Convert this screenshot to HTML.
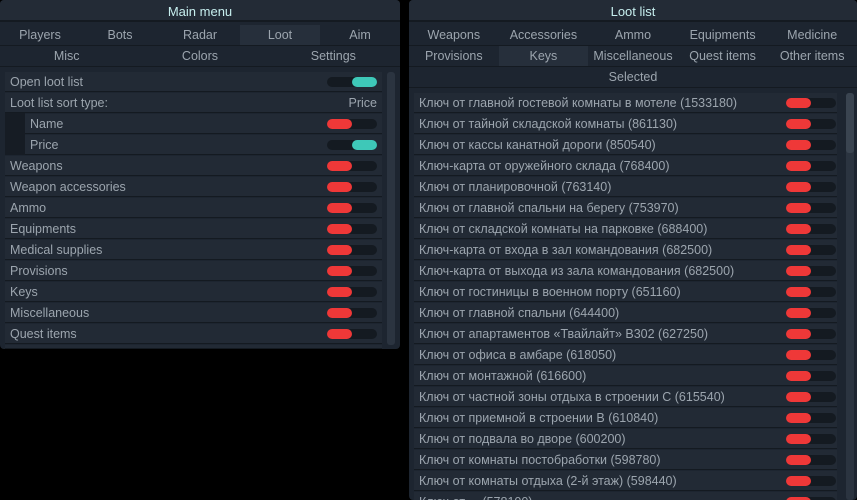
<!DOCTYPE html><html><head><meta charset="utf-8"><style>
*{margin:0;padding:0;box-sizing:border-box}
body{width:857px;height:500px;background:#000;overflow:hidden;font-family:"Liberation Sans","DejaVu Sans",sans-serif;font-size:12.5px;color:#9ca5ae;position:relative}
.win{position:absolute;background:#1d2530;border-radius:4px;overflow:hidden}
.title{height:22px;line-height:24px;text-align:center;color:#c6eeee;background:#232b36;border-bottom:2px solid #141a21;font-size:13px}
.tabs{display:flex;height:21px;border-bottom:1px solid #141a21}
.tabs div{flex:1;text-align:center;line-height:20px}
.tabs .act{background:#262f3b}
.first{margin-top:3px}
.row{position:absolute;height:20px;line-height:21px;background:#222a35;border-bottom:1px solid #141a21;padding-left:5px}
.tg{position:absolute;width:50px;height:10px;top:5px;background:#141a21;border-radius:5px}
.tg i{position:absolute;top:0;width:25px;height:10px;border-radius:5px;background:#ef3838;left:0}
.tg.on i{left:25px;background:#3ec8b8}
.sb{position:absolute;width:8px;background:#2b3440;border-radius:3px}
</style></head><body>
<div class="win" style="left:0;top:0;width:400px;height:349px">
<div class="title">Main menu</div>
<div class="tabs first"><div>Players</div><div>Bots</div><div>Radar</div><div class="act">Loot</div><div>Aim</div></div>
<div class="tabs"><div>Misc</div><div>Colors</div><div>Settings</div></div>
<div style="position:absolute;left:5px;top:113px;width:20px;height:42px;background:#161c24"></div>
<div class="row" style="left:5px;top:72px;width:377px">Open loot list<div class="tg on" style="left:322px"><i></i></div></div>
<div class="row" style="left:5px;top:93px;width:377px">Loot list sort type:<span style="position:absolute;right:5px">Price</span></div>
<div class="row" style="left:25px;top:114px;width:357px">Name<div class="tg" style="left:302px"><i></i></div></div>
<div class="row" style="left:25px;top:135px;width:357px">Price<div class="tg on" style="left:302px"><i></i></div></div>
<div class="row" style="left:5px;top:156px;width:377px">Weapons<div class="tg" style="left:322px"><i></i></div></div>
<div class="row" style="left:5px;top:177px;width:377px">Weapon accessories<div class="tg" style="left:322px"><i></i></div></div>
<div class="row" style="left:5px;top:198px;width:377px">Ammo<div class="tg" style="left:322px"><i></i></div></div>
<div class="row" style="left:5px;top:219px;width:377px">Equipments<div class="tg" style="left:322px"><i></i></div></div>
<div class="row" style="left:5px;top:240px;width:377px">Medical supplies<div class="tg" style="left:322px"><i></i></div></div>
<div class="row" style="left:5px;top:261px;width:377px">Provisions<div class="tg" style="left:322px"><i></i></div></div>
<div class="row" style="left:5px;top:282px;width:377px">Keys<div class="tg" style="left:322px"><i></i></div></div>
<div class="row" style="left:5px;top:303px;width:377px">Miscellaneous<div class="tg" style="left:322px"><i></i></div></div>
<div class="row" style="left:5px;top:324px;width:377px">Quest items<div class="tg" style="left:322px"><i></i></div></div>
<div class="row" style="left:5px;top:345px;width:377px;height:4px"></div>
<div class="sb" style="left:387px;top:72px;height:273px"></div>
</div>
<div class="win" style="left:409px;top:0;width:448px;height:500px">
<div class="title">Loot list</div>
<div class="tabs first"><div>Weapons</div><div>Accessories</div><div>Ammo</div><div>Equipments</div><div>Medicine</div></div>
<div class="tabs"><div>Provisions</div><div class="act">Keys</div><div>Miscellaneous</div><div>Quest items</div><div>Other items</div></div>
<div class="tabs"><div>Selected</div></div>
<div class="sb" style="left:437px;top:93px;height:407px"></div>
<div class="sb" style="left:437px;top:93px;height:60px;background:#3a4450"></div>
<div id="L"></div>
</div>
<script>
var t=["Ключ от главной гостевой комнаты в мотеле (1533180)","Ключ от тайной складской комнаты (861130)","Ключ от кассы канатной дороги (850540)","Ключ-карта от оружейного склада (768400)","Ключ от планировочной (763140)","Ключ от главной спальни на берегу (753970)","Ключ от складской комнаты на парковке (688400)","Ключ-карта от входа в зал командования (682500)","Ключ-карта от выхода из зала командования (682500)","Ключ от гостиницы в военном порту (651160)","Ключ от главной спальни (644400)","Ключ от апартаментов «Твайлайт» B302 (627250)","Ключ от офиса в амбаре (618050)","Ключ от монтажной (616600)","Ключ от частной зоны отдыха в строении C (615540)","Ключ от приемной в строении B (610840)","Ключ от подвала во дворе (600200)","Ключ от комнаты постобработки (598780)","Ключ от комнаты отдыха (2-й этаж) (598440)","Ключ от ... (578100)"],h="";
t.forEach(function(s,i){h+='<div class="row" style="left:5px;top:'+(93+i*21)+'px;width:423px">'+s+'<div class="tg" style="left:372px"><i></i></div></div>'});
document.getElementById("L").innerHTML=h;
</script>
</body></html>
